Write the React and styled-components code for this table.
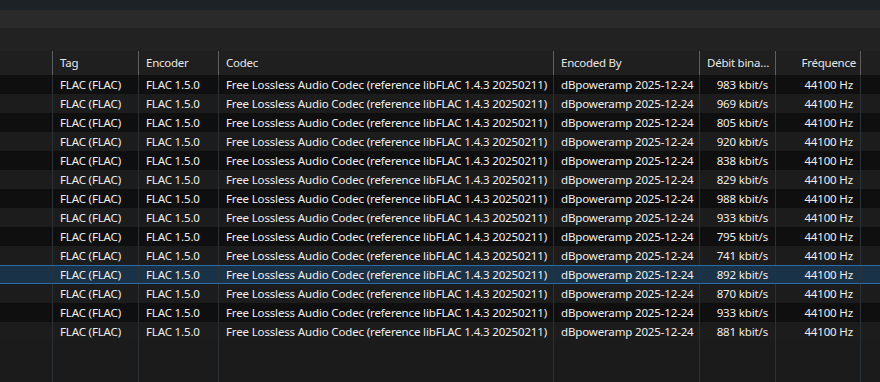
import styled, { createGlobalStyle } from 'styled-components';

const GlobalStyle = createGlobalStyle`
  html, body {
    margin: 0;
    padding: 0;
    background: #1b1b1b;
  }
  body {
    font-family: "Noto Sans", "Open Sans", sans-serif;
    font-size: 11.5px;
    letter-spacing: -0.15px;
    color: #ececec;
  }
`

const columns = [
  { key: 'lead', label: '', width: 53 },
  { key: 'tag', label: 'Tag', width: 86 },
  { key: 'encoder', label: 'Encoder', width: 80 },
  { key: 'codec', label: 'Codec', width: 335 },
  { key: 'by', label: 'Encoded By', width: 146 },
  { key: 'rate', label: 'Débit binaire', width: 76, right: true },
  { key: 'freq', label: 'Fréquence', width: 85, right: true },
]

const bitrates = [983, 969, 805, 920, 838, 829, 988, 933, 795, 741, 892, 870, 933, 881]
const SELECTED = 10

const rows = bitrates.map((kbps) => ({
  lead: '',
  tag: 'FLAC (FLAC)',
  encoder: 'FLAC 1.5.0',
  codec: 'Free Lossless Audio Codec (reference libFLAC 1.4.3 20250211)',
  by: 'dBpoweramp 2025-12-24',
  rate: `${kbps} kbit/s`,
  freq: '44100 Hz',
}))

function App() {
  return (
    <>
      <GlobalStyle />
      <StyledWindow>
        <StyledTitleStrip />
        <StyledToolStrip />
        <StyledSpacer />
        <StyledList>
          <StyledHeader>
            {columns.map((col) => (
              <StyledHeaderCell key={col.key} $width={col.width} $right={col.right}>
                {col.label}
              </StyledHeaderCell>
            ))}
            <StyledHeaderFill />
          </StyledHeader>
          {rows.map((row, i) => (
            <StyledRow key={i} $odd={i % 2 === 0} $selected={i === SELECTED}>
              {columns.map((col) => (
                <StyledCell key={col.key} $width={col.width} $right={col.right}>
                  {row[col.key]}
                </StyledCell>
              ))}
              <StyledRowFill />
            </StyledRow>
          ))}
          <StyledEmpty>
            {columns.map((col) => (
              <StyledEmptyCol key={col.key} $width={col.width} />
            ))}
          </StyledEmpty>
        </StyledList>
      </StyledWindow>
    </>
  )
}

export default App

const StyledWindow = styled.div`
  width: 880px;
  height: 382px;
  display: flex;
  flex-direction: column;
  overflow: hidden;
  background: #1b1b1b;
`

const StyledTitleStrip = styled.div`
  height: 10px;
  background: #1d2226;
  flex: none;
`

const StyledToolStrip = styled.div`
  height: 18px;
  background: #2a2a2a;
  flex: none;
`

const StyledSpacer = styled.div`
  height: 23px;
  background: #222222;
  flex: none;
`

const StyledList = styled.div`
  flex: 1;
  display: flex;
  flex-direction: column;
  min-height: 0;
`

const StyledHeader = styled.div`
  display: flex;
  height: 24px;
  background: #1f1f1f;
  flex: none;
`

const StyledHeaderCell = styled.div`
  width: ${(p) => p.$width}px;
  flex: none;
  box-sizing: border-box;
  padding: 0 4px 0 7px;
  line-height: 24px;
  letter-spacing: -0.25px;
  text-align: ${(p) => (p.$right ? 'right' : 'left')};
  border-right: 1px solid #5e5e5e;
  color: #e6e6e6;
  white-space: nowrap;
  overflow: hidden;
  text-overflow: ellipsis;
`

const StyledHeaderFill = styled.div`
  flex: 1;
`

const StyledRow = styled.div`
  display: flex;
  height: 19px;
  flex: none;
  box-sizing: border-box;
  background: ${(p) => (p.$selected ? '#1a3248' : p.$odd ? '#0f0f0f' : '#1c1c1c')};
  ${(p) =>
    p.$selected &&
    `
    border-top: 1px solid #2c6ca6;
    border-bottom: 1px solid #2c6ca6;
  `}
`

const StyledCell = styled.div`
  width: ${(p) => p.$width}px;
  flex: none;
  box-sizing: border-box;
  padding: 0 7px;
  display: flex;
  align-items: center;
  justify-content: ${(p) => (p.$right ? 'flex-end' : 'flex-start')};
  border-right: 1px solid #2b3034;
  white-space: nowrap;
  overflow: hidden;
  color: #eeeeee;
`

const StyledRowFill = styled.div`
  flex: 1;
`

const StyledEmpty = styled.div`
  flex: 1;
  display: flex;
`

const StyledEmptyCol = styled.div`
  width: ${(p) => p.$width}px;
  flex: none;
  box-sizing: border-box;
  border-right: 1px solid #2b3034;
`
